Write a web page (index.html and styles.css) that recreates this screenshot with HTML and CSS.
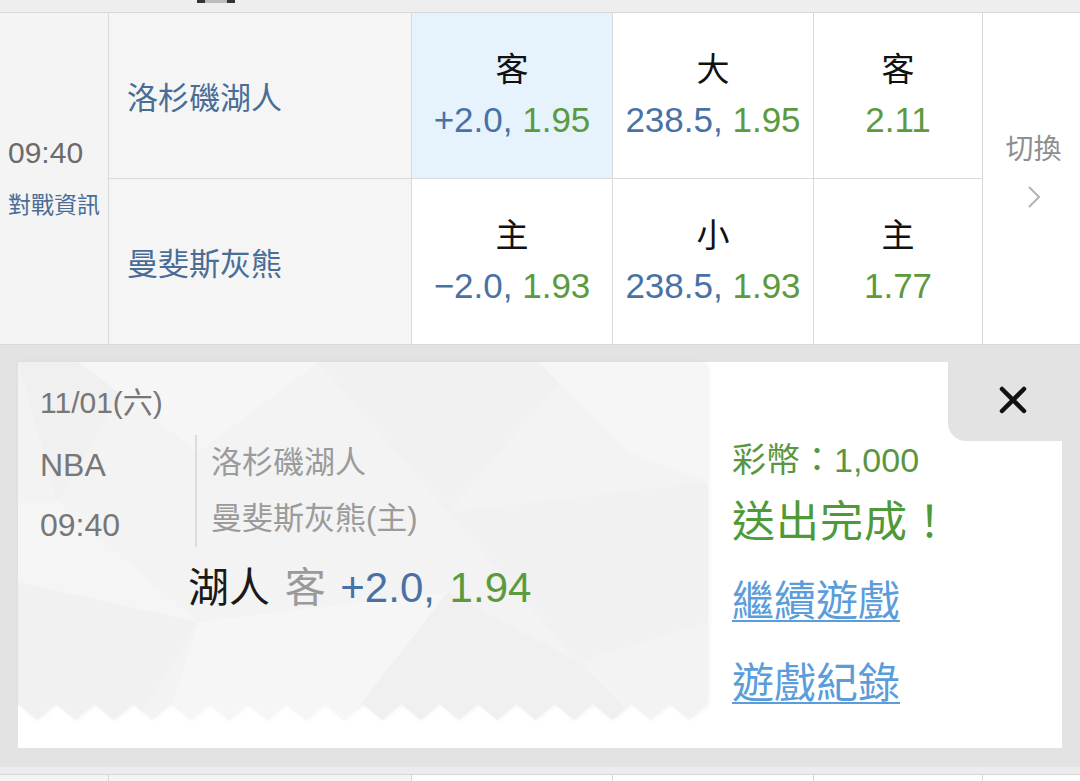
FILE: index.html
```html
<!DOCTYPE html>
<html lang="zh-Hant">
<head>
<meta charset="utf-8">
<title>賽事</title>
<link rel="stylesheet" href="styles.css">
</head>
<body>
<div class="page">
  <div class="strip"><span class="strip-mark"></span></div>

  <div class="match">
    <div class="c time">
      <div class="time-val">09:40</div>
      <div class="time-info">對戰資訊</div>
    </div>
    <div class="c team">洛杉磯湖人</div>
    <div class="c odd sel">
      <div class="lb">客</div>
      <div class="val"><span class="blue">+2.0,</span> <span class="green">1.95</span></div>
    </div>
    <div class="c odd">
      <div class="lb">大</div>
      <div class="val"><span class="blue">238.5,</span> <span class="green">1.95</span></div>
    </div>
    <div class="c odd">
      <div class="lb">客</div>
      <div class="val"><span class="green">2.11</span></div>
    </div>
    <div class="c switch">
      <div class="switch-text">切換</div>
      <svg class="chev" width="14" height="24" viewBox="0 0 14 24"><polyline points="2,2 12,12 2,22" fill="none" stroke="#b3b3b3" stroke-width="2"/></svg>
    </div>
    <div class="c team">曼斐斯灰熊</div>
    <div class="c odd">
      <div class="lb">主</div>
      <div class="val"><span class="blue">−2.0,</span> <span class="green">1.93</span></div>
    </div>
    <div class="c odd">
      <div class="lb">小</div>
      <div class="val"><span class="blue">238.5,</span> <span class="green">1.93</span></div>
    </div>
    <div class="c odd">
      <div class="lb">主</div>
      <div class="val"><span class="green">1.77</span></div>
    </div>
  </div>

  <div class="panel">
    <div class="card">
      <div class="ticket">
        <svg class="ticket-bg" width="690" height="358" viewBox="0 0 690 358">
          <defs>
            <clipPath id="tk">
              <path d="M0 0 H682 Q690 0 690 8 V342 L670.8 358 L651.7 342 L632.5 358 L613.3 342 L594.2 358 L575 342 L555.8 358 L536.7 342 L517.5 358 L498.3 342 L479.2 358 L460 342 L440.8 358 L421.7 342 L402.5 358 L383.3 342 L364.2 358 L345 342 L325.8 358 L306.7 342 L287.5 358 L268.3 342 L249.2 358 L230 342 L210.8 358 L191.7 342 L172.5 358 L153.3 342 L134.2 358 L115 342 L95.8 358 L76.7 342 L57.5 358 L38.3 342 L19.2 358 L0 342 Z"/>
            </clipPath>
          </defs>
          <g clip-path="url(#tk)">
            <rect width="690" height="358" fill="#f3f3f3"/>
            <polygon points="0,0 120,0 40,140" fill="#f0f0f0"/>
            <polygon points="60,0 300,0 180,90" fill="#f6f6f6"/>
            <polygon points="300,0 560,0 430,150" fill="#f1f1f1"/>
            <polygon points="520,0 690,0 690,120 610,90" fill="#f6f6f6"/>
            <polygon points="430,150 690,120 690,260 560,300" fill="#f1f1f1"/>
            <polygon points="0,220 180,260 120,358 0,358" fill="#f1f1f1"/>
            <polygon points="180,260 430,230 330,358 150,358" fill="#f6f6f6"/>
            <polygon points="430,230 560,300 620,358 330,358" fill="#f0f0f0"/>
            <polygon points="0,140 40,140 180,260 0,220" fill="#f5f5f5"/>
          </g>
        </svg>
        <div class="ticket-body">
          <div class="t-date">11/01(六)</div>
          <div class="t-info">
            <div class="t-left">
              <div class="t-line">NBA</div>
              <div class="t-line">09:40</div>
            </div>
            <div class="t-teams">
              <div class="t-team">洛杉磯湖人</div>
              <div class="t-team">曼斐斯灰熊(主)</div>
            </div>
          </div>
          <div class="t-bet"><span class="bet-team">湖人</span> <span class="bet-side">客</span> <span class="blue">+2.0,</span> <span class="green">1.94</span></div>
        </div>
      </div>
      <div class="result">
        <div class="coins">彩幣：1,000</div>
        <div class="done">送出完成！</div>
        <a class="link link-1" href="#">繼續遊戲</a>
        <a class="link link-2" href="#">遊戲紀錄</a>
      </div>
      <div class="notch">
        <svg class="close" width="30" height="30" viewBox="0 0 30 30"><path d="M4 4 L26 26 M26 4 L4 26" stroke="#111" stroke-width="4.5" stroke-linecap="round"/></svg>
      </div>
    </div>
  </div>

  <div class="under-strip"></div>
  <div class="next-row">
    <div class="n n1"></div>
    <div class="n n2"></div>
    <div class="n"></div>
    <div class="n"></div>
    <div class="n"></div>
    <div class="n last"></div>
  </div>
</div>
</body>
</html>
```

FILE: styles.css
```css
html, body {
  margin: 0;
  padding: 0;
  background: #ffffff;
}
body {
  font-family: "Liberation Sans", "Noto Sans CJK TC", sans-serif;
}
.page {
  width: 1080px;
  height: 781px;
  overflow: hidden;
}

/* top strip (previous row remains) */
.strip {
  height: 12px;
  background: #eeeeee;
  border-bottom: 1px solid #d8d8d8;
  position: relative;
}
.strip-mark {
  position: absolute;
  left: 197px;
  top: 0;
  width: 38px;
  height: 3px;
  background: linear-gradient(90deg, #333 0 8px, #bbb 8px 30px, #333 30px);
}

/* match table */
.match {
  display: grid;
  grid-template-columns: 109px 303px 201px 201px 169px 97px;
  grid-template-rows: 166px 166px;
}
.c {
  box-sizing: border-box;
  border-right: 1px solid #d9d9d9;
  border-bottom: 1px solid #d9d9d9;
  background: #ffffff;
}
.time {
  grid-row: span 2;
  background: #f4f4f4;
  display: flex;
  flex-direction: column;
  justify-content: center;
  padding-left: 8px;
  padding-bottom: 5px;
}
.time-val {
  font-size: 30px;
  line-height: 40px;
  color: #6b6b6b;
}
.time-info {
  margin-top: 17px;
  font-size: 23px;
  line-height: 30px;
  color: #4a6d96;
}
.team {
  background: #f5f5f5;
  display: flex;
  align-items: center;
  padding-left: 18px;
  font-size: 31px;
  color: #4a6d96;
}
.odd {
  display: flex;
  flex-direction: column;
  justify-content: center;
  align-items: center;
  padding-bottom: 2px;
}
.odd.sel {
  background: #e6f2fc;
}
.lb {
  font-size: 33px;
  line-height: 50px;
  color: #111111;
}
.val {
  font-size: 35px;
  line-height: 50px;
  white-space: nowrap;
}
.blue { color: #4872a6; }
.green { color: #5b9a3d; }

.switch {
  grid-row: span 2;
  grid-column: 6;
  border-right: none;
  display: flex;
  flex-direction: column;
  align-items: center;
  justify-content: center;
  padding-bottom: 18px;
}
.switch-text {
  font-size: 28px;
  line-height: 40px;
  color: #8f8f8f;
  margin-left: 4px;
}
.chev {
  margin-top: 15px;
  margin-left: 4px;
}

/* confirmation panel */
.panel {
  background: #e3e3e3;
  padding: 17px 18px 19px 18px;
}
.card {
  position: relative;
  height: 386px;
  background: #ffffff;
  display: flex;
}
.ticket {
  position: relative;
  width: 690px;
  height: 358px;
  flex: none;
}
.ticket-bg {
  position: absolute;
  left: 0;
  top: 0;
  filter: drop-shadow(1px 0 2px rgba(0, 0, 0, 0.05));
}
.ticket-body {
  position: relative;
  padding: 21px 0 0 22px;
}
.t-date {
  font-size: 30px;
  line-height: 40px;
  color: #777777;
}
.t-info {
  display: flex;
  margin-top: 12px;
}
.t-left {
  width: 155px;
}
.t-line {
  font-size: 32px;
  line-height: 60px;
  color: #777777;
}
.t-teams {
  border-left: 2px solid #dddddd;
  padding-left: 14px;
  height: 112px;
}
.t-team {
  font-size: 31px;
  line-height: 56px;
  color: #9b9b9b;
}
.t-bet {
  margin: 8px 0 0 148px;
  font-size: 42px;
  line-height: 50px;
  white-space: nowrap;
  word-spacing: 3px;
}
.bet-team { color: #1a1a1a; font-size: 41px; }
.bet-side { color: #9a9a9a; font-size: 41px; }

.result {
  flex: 1;
  padding: 76px 0 0 24px;
  display: flex;
  flex-direction: column;
  align-items: flex-start;
}
.coins {
  font-size: 34px;
  line-height: 44px;
  color: #5a9640;
}
.done {
  font-size: 43px;
  line-height: 80px;
  color: #4f9a38;
  letter-spacing: 1px;
}
.link {
  font-size: 42px;
  color: #5b9ddb;
  text-decoration: underline;
  text-decoration-thickness: 2px;
  text-underline-offset: 4px;
}
.link-1 {
  line-height: 80px;
}
.link-2 {
  line-height: 84px;
}
.notch {
  position: absolute;
  top: 0;
  right: 0;
  width: 114px;
  height: 79px;
  background: #e3e3e3;
  border-bottom-left-radius: 18px;
}
.close {
  position: absolute;
  left: 50px;
  top: 23px;
}

/* next row remains */
.under-strip {
  height: 7px;
  background: #ececec;
  border-bottom: 1px solid #d6d6d6;
}
.next-row {
  display: grid;
  grid-template-columns: 109px 303px 201px 201px 169px 97px;
  height: 6px;
}
.n {
  box-sizing: border-box;
  border-right: 1px solid #d9d9d9;
  background: #ffffff;
}
.n1, .n2 {
  background: #f4f4f4;
}
.n.last {
  border-right: none;
}
```
